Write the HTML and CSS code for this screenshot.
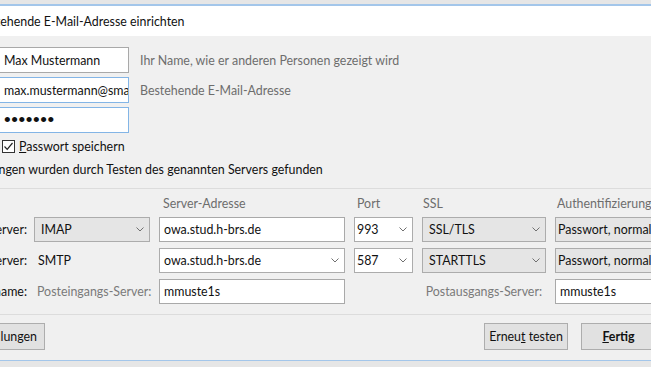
FILE: index.html
```html
<!DOCTYPE html>
<html lang="de">

<head>
  <meta charset="UTF-8" />
  <title>Bestehende E-Mail-Adresse einrichten</title>
  <link rel="stylesheet" href="styles.css">
</head>

<body>

  <div class="window">
    <div class="titlebar">
      <span class="title">Bestehende E-Mail-Adresse einrichten</span>
    </div>

    <div class="dialog">
      <div class="identity">
        <div class="textbox">Max Mustermann</div>
        <span class="hint">Ihr Name, wie er anderen Personen gezeigt wird</span>
        <div class="textbox focus">max.mustermann@smail.inf.h-brs.de</div>
        <span class="hint">Bestehende E-Mail-Adresse</span>
        <div class="textbox focus password">•••••••</div>
      </div>

      <div class="remember">
        <span class="checkbox">
          <svg width="11" height="11" viewBox="0 0 11 11">
            <path d="M1.5 5.5 L4.2 8.3 L9.5 2" fill="none" stroke="#222" stroke-width="1.2" />
          </svg>
        </span>
        <span><u>P</u>asswort speichern</span>
      </div>

      <p class="status">Die folgenden Einstellungen wurden durch Testen des genannten Servers gefunden</p>

      <div class="rule"></div>

      <div class="servers">
        <span></span>
        <span></span>
        <span class="colhead addr">Server-Adresse</span>
        <span class="colhead port">Port</span>
        <span class="colhead ssl">SSL</span>
        <span class="colhead auth">Authentifizierung</span>

        <span class="label">Posteingangs-Server:</span>
        <div class="select">IMAP <svg class="chev" width="8" height="5" viewBox="0 0 8 5"><path d="M0.5 0.5 L4 4 L7.5 0.5" /></svg></div>
        <div class="textbox host">owa.stud.h-brs.de</div>
        <div class="combo">993 <svg class="chev" width="8" height="5" viewBox="0 0 8 5"><path d="M0.5 0.5 L4 4 L7.5 0.5" /></svg></div>
        <div class="select">SSL/TLS <svg class="chev" width="8" height="5" viewBox="0 0 8 5"><path d="M0.5 0.5 L4 4 L7.5 0.5" /></svg></div>
        <div class="select auth-box">Passwort, normal <svg class="chev" width="8" height="5" viewBox="0 0 8 5"><path d="M0.5 0.5 L4 4 L7.5 0.5" /></svg></div>

        <span class="label">Postausgangs-Server:</span>
        <span class="plain">SMTP</span>
        <div class="combo host">owa.stud.h-brs.de <svg class="chev" width="8" height="5" viewBox="0 0 8 5"><path d="M0.5 0.5 L4 4 L7.5 0.5" /></svg></div>
        <div class="combo">587 <svg class="chev" width="8" height="5" viewBox="0 0 8 5"><path d="M0.5 0.5 L4 4 L7.5 0.5" /></svg></div>
        <div class="select">STARTTLS <svg class="chev" width="8" height="5" viewBox="0 0 8 5"><path d="M0.5 0.5 L4 4 L7.5 0.5" /></svg></div>
        <div class="select auth-box">Passwort, normal <svg class="chev" width="8" height="5" viewBox="0 0 8 5"><path d="M0.5 0.5 L4 4 L7.5 0.5" /></svg></div>

        <span class="label">Benutzername:</span>
        <span class="plain muted">Posteingangs-Server:</span>
        <div class="textbox host">mmuste1s</div>
        <span class="plain muted outgoing">Postausgangs-Server:</span>
        <div class="textbox host">mmuste1s</div>
      </div>

      <div class="rule bottom"></div>

      <div class="buttons">
        <button class="btn btn-advanced">Erweiterte Einstellungen</button>
        <div class="actions">
          <button class="btn btn-retest">Erneu<u>t</u> testen</button>
          <button class="btn btn-done"><u>F</u>ertig</button>
        </div>
      </div>
    </div>
  </div>

</body>

</html>
```

FILE: styles.css
```css
* {
  margin: 0;
  padding: 0;
  box-sizing: border-box;
}

html,
body {
  overflow: hidden;
}

body {
  width: 651px;
  height: 367px;
  font-family: Lato, "Noto Sans", sans-serif;
  font-size: 12.4px;
  color: #111;
  background: #e6e6e6;
}

.window {
  width: 660px;
  margin-top: 4px;
  background: #f0f0f0;
  border-top: 2px solid #a3c6ea;
  border-bottom: 1px solid #a3c6ea;
}

.titlebar {
  height: 30px;
  background: #fff;
  display: flex;
  align-items: center;
  white-space: nowrap;
}

.title {
  margin-left: -24px;
}

.dialog {
  height: 324px;
  padding-top: 11px;
}

/* Name, Adresse, Passwort */
.identity {
  display: grid;
  grid-template-columns: 133px auto;
  column-gap: 11px;
  row-gap: 4px;
  align-items: center;
  margin-left: -4px;
}

.textbox {
  height: 26px;
  background: #fff;
  border: 1px solid #a9a9a9;
  padding: 0 7px;
  display: flex;
  align-items: center;
  white-space: nowrap;
  overflow: hidden;
}

.textbox.focus {
  border-color: #83b5e6;
}

.password {
  font-family: "Liberation Sans", sans-serif;
  font-size: 19px;
  letter-spacing: 0.6px;
}

.hint {
  color: #6d6d6d;
  white-space: nowrap;
}

.remember {
  display: flex;
  align-items: center;
  gap: 4px;
  height: 16px;
  margin: 5px 0 0 2px;
}

.checkbox {
  width: 13px;
  height: 13px;
  border: 1px solid #333;
  background: #fff;
  display: flex;
}

.status {
  height: 16px;
  line-height: 16px;
  margin: 8px 0 0 -127px;
  white-space: nowrap;
}

.rule {
  border-top: 1px solid #dcdcdc;
  margin-top: 10px;
}

/* Servertabelle */
.servers {
  display: grid;
  grid-template-columns: 130px 116px 186px 59px 124px 130px;
  grid-template-rows: 15px 25px 25px 25px;
  column-gap: 9px;
  row-gap: 6px;
  align-items: center;
  margin: 7px 0 0 -105px;
}

.colhead {
  color: #6d6d6d;
  white-space: nowrap;
}

.addr {
  padding-left: 4px;
}

.port {
  padding-left: 3px;
}

.ssl {
  padding-left: 1px;
}

.auth {
  padding-left: 2px;
}

.label {
  text-align: right;
  margin-right: -2px;
  white-space: nowrap;
}

.select,
.combo {
  height: 25px;
  display: flex;
  align-items: center;
  justify-content: space-between;
  border: 1px solid #acacac;
  padding: 0 5px 0 6px;
  white-space: nowrap;
  overflow: hidden;
}

.select {
  background: #e5e5e5;
}

.combo {
  background: #fff;
  padding-left: 2px;
}

.servers .textbox,
.host {
  height: 25px;
}

.host {
  padding-left: 4px;
}

.auth-box {
  padding-left: 2px;
}

.chev {
  flex: none;
}

.chev path {
  fill: none;
  stroke: #707070;
  stroke-width: 1;
}

.plain {
  padding-left: 4px;
  white-space: nowrap;
}

.muted {
  color: #7a7a7a;
  padding-left: 3px;
}

.outgoing {
  grid-column: 4 / 6;
  text-align: right;
  padding-right: 4px;
}

.rule.bottom {
  margin-top: 10px;
}

/* Knöpfe */
.buttons {
  display: flex;
  margin-top: 8px;
  padding-right: 4px;
}

.btn {
  height: 27px;
  font-family: inherit;
  font-size: 12.4px;
  color: #111;
  background: #e1e1e1;
  border: 1px solid #adadad;
  white-space: nowrap;
}

.btn-advanced {
  width: 150px;
  margin-left: -105px;
  text-align: right;
  padding-right: 7px;
}

.actions {
  margin-left: auto;
  display: flex;
  gap: 13px;
}

.btn-retest {
  width: 84px;
}

.btn-done {
  width: 75px;
  font-weight: 700;
}
```
